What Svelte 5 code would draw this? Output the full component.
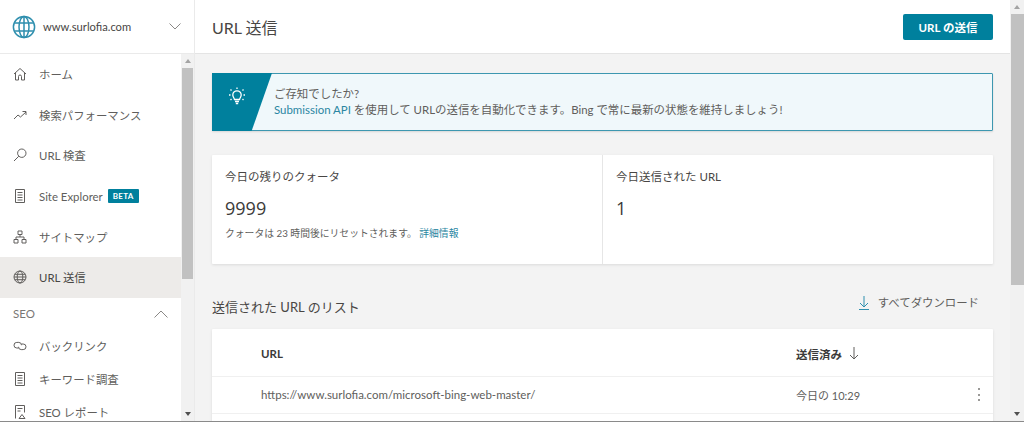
<script>
  const ink = '#605e5c';
</script>

<div class="page">
  <aside class="side">
    <div class="site">
      <svg class="globe" width="24" height="24" viewBox="0 0 24 24" fill="none" stroke="#2f8fae" stroke-width="1.5">
        <circle cx="12" cy="12" r="10.6"/>
        <ellipse cx="12" cy="12" rx="5" ry="10.6"/>
        <path d="M12 1.4v21.2M2.2 8h19.6M2.2 16h19.6"/>
      </svg>
      <span class="site-name">www.surlofia.com</span>
      <svg class="chev" width="12" height="7" viewBox="0 0 12 7" fill="none" stroke="#8a8886"><path d="M.5.5 6 6l5.500-5.500"/></svg>
    </div>
    <div class="side-body">
      <nav class="nav">
        <div class="item">
          <svg width="14" height="14" viewBox="0 0 14 14" fill="none" stroke={ink}><path d="M1 7 7 1.500 13 7M2.500 5.800V13h3V9.500a1.500 1.500 0 0 1 3 0V13h3V5.800"/></svg>
          <span>ホーム</span>
        </div>
        <div class="item">
          <svg width="14" height="14" viewBox="0 0 14 14" fill="none" stroke={ink}><path d="M1 11l4-4 2.500 2L13 4M9.500 3.500H13V7"/></svg>
          <span>検索パフォーマンス</span>
        </div>
        <div class="item">
          <svg width="14" height="14" viewBox="0 0 14 14" fill="none" stroke={ink}><circle cx="8.800" cy="5.200" r="4.200"/><path d="M5.800 8.200 1 13"/></svg>
          <span>URL 検査</span>
        </div>
        <div class="item">
          <svg width="14" height="14" viewBox="0 0 14 14" fill="none" stroke={ink}><path d="M2.500.5h9v13h-9zM4.500 3.500h5M4.500 6h5M4.500 8.500h5M4.500 11h5"/></svg>
          <span>Site Explorer</span><b class="beta">BETA</b>
        </div>
        <div class="item">
          <svg width="14" height="14" viewBox="0 0 14 14" fill="none" stroke={ink}><path d="M5 1h4v3.500H5zM1 9.500h4V13H1zM9 9.500h4V13H9zM7 4.500V7M3 9.500V7h8v2.500"/></svg>
          <span>サイトマップ</span>
        </div>
        <div class="item active">
          <svg width="14" height="14" viewBox="0 0 14 14" fill="none" stroke={ink}><circle cx="7" cy="7" r="6"/><ellipse cx="7" cy="7" rx="2.800" ry="6"/><path d="M1 7h12M1.800 4.300h10.400M1.800 9.700h10.400"/></svg>
          <span>URL 送信</span>
        </div>
        <div class="group">
          <span>SEO</span>
          <svg width="14" height="8" viewBox="0 0 14 8" fill="none" stroke="#8a8886"><path d="M.5 7.500 7 1l6.500 6.500"/></svg>
        </div>
        <div class="item sub">
          <svg width="14" height="14" viewBox="0 0 14 14" fill="none" stroke={ink}><path d="M5.500 9H3.800a2.800 2.800 0 0 1 0-5.600h2a2.800 2.800 0 0 1 2.700 2.800M8.500 5h1.700a2.800 2.800 0 0 1 0 5.600h-2a2.800 2.800 0 0 1-2.700-2.800"/></svg>
          <span>バックリンク</span>
        </div>
        <div class="item sub">
          <svg width="14" height="14" viewBox="0 0 14 14" fill="none" stroke={ink}><path d="M2.500.5h9v13h-9zM4.500 3.500h5M4.500 6h5M4.500 8.500h5M4.500 11h5"/></svg>
          <span>キーワード調査</span>
        </div>
        <div class="item sub">
          <svg width="14" height="14" viewBox="0 0 14 14" fill="none" stroke={ink}><path d="M2.500 13.500V.5h9v7M4.500 3.500h5M4.500 6h3M6 13.500l3-4 3 4z"/></svg>
          <span>SEO レポート</span>
        </div>
      </nav>
      <div class="bar">
        <i class="up"></i>
        <div class="track"><div class="thumb side-thumb"></div></div>
        <i class="down"></i>
      </div>
    </div>
  </aside>

  <main class="main">
    <header class="head">
      <h1>URL 送信</h1>
      <button>URL の送信</button>
    </header>

    <div class="content">
      <section class="tip">
        <div class="tip-icon">
          <svg width="18" height="18" viewBox="0 0 18 18" fill="none" stroke="#fff" stroke-width="1.300">
            <path d="M6.500 12.500C6 10.500 4.800 10 4.800 8a4.200 4.200 0 0 1 8.400 0c0 2-1.200 2.500-1.700 4.500zM7 14.500h4M7.800 16.500h2.400M9 .5V2M2.500 2.500l1 1M15.500 2.500l-1 1M1 8h1.500M15.500 8H17M2.500 13l1-1M15.500 13l-1-1"/>
          </svg>
        </div>
        <div class="tip-text">
          <p>ご存知でしたか?</p>
          <p><a href="#a">Submission API</a> を使用して URLの送信を自動化できます。Bing で常に最新の状態を維持しましょう!</p>
        </div>
      </section>

      <section class="stats card">
        <div class="stat">
          <h2>今日の残りのクォータ</h2>
          <div class="num">9999</div>
          <p class="note">クォータは 23 時間後にリセットされます。 <a href="#b">詳細情報</a></p>
        </div>
        <div class="stat second">
          <h2>今日送信された URL</h2>
          <div class="num">1</div>
        </div>
      </section>

      <div class="list-head">
        <h3>送信された URL のリスト</h3>
        <div class="dl">
          <svg width="10" height="14" viewBox="0 0 10 14" fill="none" stroke="#2f8fae"><path d="M5 0v10.500M1 7l4 4 4-4M0 13.500h10"/></svg>
          <span>すべてダウンロード</span>
        </div>
      </div>

      <section class="table card">
        <div class="row th">
          <span class="c-url">URL</span>
          <span class="c-date">送信済み
            <svg width="10" height="13" viewBox="0 0 10 13" fill="none" stroke="#605e5c"><path d="M5 0v12M1 8l4 4 4-4"/></svg>
          </span>
        </div>
        <div class="row td">
          <span class="c-url">https://www.surlofia.com/microsoft-bing-web-master/</span>
          <span class="c-date plain">今日の 10:29</span>
          <span class="more"><i></i><i></i><i></i></span>
        </div>
      </section>
    </div>
  </main>

  <div class="bar page-bar">
    <i class="up"></i>
    <div class="track"><div class="thumb page-thumb"></div></div>
    <i class="down"></i>
  </div>
</div>
<div class="edge"></div>

<style>
  :global(body) {
    margin: 0;
    background: #f3f3f3;
    overflow: hidden;
  }
  .page {
    display: flex;
    height: 421px;
    overflow: hidden;
    font-family: Lato, "Noto Sans CJK JP", sans-serif;
    color: #605e5c;
    font-size: 12px;
  }
  .edge { height: 1px; background: #8a8a8a; }
  .side {
    flex: 0 0 194px;
    display: flex;
    flex-direction: column;
    background: #fff;
    border-right: 1px solid #eaeaea;
  }
  .site {
    flex: 0 0 54px;
    box-sizing: border-box;
    display: flex;
    align-items: center;
    padding: 0 13px 0 12px;
    border-bottom: 1px solid #eaeaea;
  }
  .site-name { margin-left: 7px; flex: 1; font-size: 11.200px; color: #484644; }
  .side-body { flex: 1; display: flex; min-height: 0; }
  .nav { width: 181px; overflow: hidden; }
  .item {
    height: 40.600px;
    display: flex;
    align-items: center;
    padding-left: 13px;
    gap: 12px;
    font-size: 11.400px;
    white-space: nowrap;
  }
  .item svg { flex: none; }
  .item.sub { height: 33px; }
  .item.active { background: #edebe9; color: #484644; }
  .group {
    height: 32px;
    display: flex;
    align-items: center;
    justify-content: space-between;
    padding: 0 13px;
    font-size: 11.500px;
    color: #797775;
  }
  .beta {
    margin-left: -7px;
    background: #00809d;
    color: #fff;
    font-size: 8px;
    font-weight: 700;
    line-height: 14px;
    padding: 0 5px;
    border-radius: 1px;
    letter-spacing: .3px;
  }
  .bar {
    flex: 0 0 13px;
    display: flex;
    flex-direction: column;
    background: #f1f1f1;
  }
  .page-bar { flex-basis: 14px; }
  .up, .down {
    flex: 0 0 14px;
    display: flex;
    align-items: center;
    justify-content: center;
  }
  .up::before, .down::before {
    content: "";
    border: 3.500px solid transparent;
  }
  .up::before { border-bottom: 4px solid #a3a3a3; border-top: 0; }
  .down::before { border-top: 4px solid #505050; border-bottom: 0; }
  .track { flex: 1; min-height: 0; }
  .thumb { background: #c1c1c1; }
  .side-thumb { height: 211px; width: 11px; margin-left: 1px; }
  .page-thumb { height: 271px; margin-left: 1px; }
  .main {
    flex: 1;
    min-width: 0;
    display: flex;
    flex-direction: column;
    background: #f3f3f3;
  }
  .head {
    flex: 0 0 54px;
    box-sizing: border-box;
    display: flex;
    align-items: center;
    justify-content: space-between;
    padding: 0 17px;
    background: #fff;
    border-bottom: 1px solid #e4e4e4;
  }
  h1 { margin: 0; font-size: 16px; font-weight: 400; color: #484644; }
  button {
    width: 90px;
    height: 26px;
    padding: 0;
    border: 0;
    border-radius: 2px;
    background: #00809d;
    color: #fff;
    font: 700 11.500px Lato, "Noto Sans CJK JP", sans-serif;
  }
  .content { padding: 19px 17px 0; }
  .tip {
    height: 58px;
    box-sizing: border-box;
    display: flex;
    background: #f0f8fb;
    border: 1px solid #3d97b0;
    border-radius: 1px;
    box-shadow: 0 1px 2px rgba(0,0,0,.12);
  }
  .tip-icon {
    flex: 0 0 60px;
    margin: -1px 0 -1px -1px;
    background: #00809d;
    clip-path: polygon(0 0, 100% 0, 66% 100%, 0 100%);
    display: flex;
    padding: 14px 0 0 16px;
    box-sizing: border-box;
  }
  .tip-text { margin-left: 2px; padding-top: 12px; font-size: 11.450px; line-height: 16px; }
  .tip-text p { margin: 0; }
  a { color: #2a86a2; text-decoration: none; }
  .card {
    background: #fff;
    border-radius: 1px;
    box-shadow: 0 1px 3px rgba(0,0,0,.1);
  }
  .stats {
    margin-top: 24px;
    height: 109px;
    display: flex;
  }
  .stat { flex: 1; box-sizing: border-box; padding: 14px 13px 0; }
  .second { flex: 0 0 391px; border-left: 1px solid #e6e6e6; }
  h2 { margin: 0; font-size: 11.500px; font-weight: 400; line-height: 16px; color: #484644; }
  .num { margin-top: 11px; font: 18px/24px "Open Sans", sans-serif; color: #3b3a39; }
  .note { margin: 6px 0 0; font-size: 9.800px; line-height: 14px; color: #605e5c; }
  .list-head {
    height: 65px;
    display: flex;
    justify-content: space-between;
    align-items: flex-start;
  }
  h3 { margin: 33px 0 0; font-size: 13px; font-weight: 400; line-height: 20px; color: #484644; }
  .dl { margin: 31px 14px 0 0; display: flex; align-items: center; gap: 9px; font-size: 11.400px; line-height: 16px; }
  .row { display: flex; align-items: center; position: relative; font-size: 11.500px; }
  .th { height: 48px; padding-bottom: 0; padding-top: 2px; font-weight: 700; color: #3b3a39; border-bottom: 1px solid #f0f0f0; box-sizing: border-box; }
  .td { height: 37px; padding-bottom: 1px; border-bottom: 1px solid #f0f0f0; box-sizing: border-box; color: #605e5c; }
  .c-url { margin-left: 49px; flex: 0 0 535px; }
  .c-date { display: flex; align-items: center; gap: 7px; }
  .plain { font-size: 11px; }
  .more { position: absolute; right: 13px; top: 11px; display: flex; flex-direction: column; gap: 3.500px; }
  .more i { width: 2px; height: 2px; background: #797775; border-radius: 50%; }
  .table { height: 200px; }
</style>
